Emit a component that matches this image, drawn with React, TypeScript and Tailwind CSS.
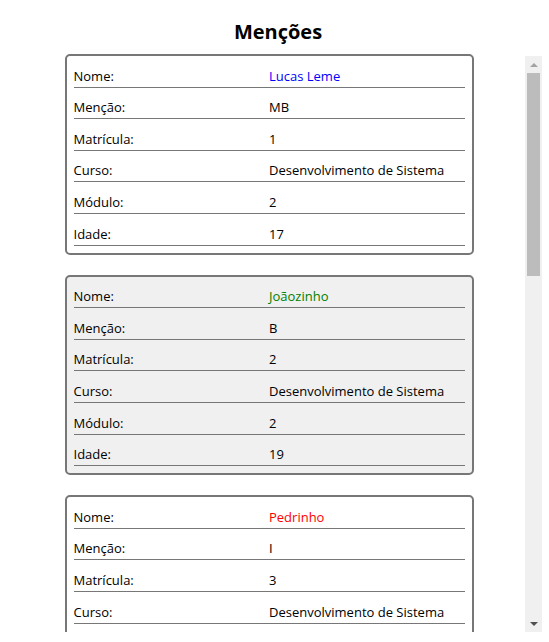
const cores: Record<string, string> = {
  MB: "text-[#0000ff]",
  B: "text-[#008000]",
  R: "text-[#ffa500]",
  I: "text-[#ff0000]",
};

const mencoes = [
  { nome: "Lucas Leme", mencao: "MB", matricula: "1", modulo: "2", idade: "17" },
  { nome: "Joãozinho", mencao: "B", matricula: "2", modulo: "2", idade: "19" },
  { nome: "Pedrinho", mencao: "I", matricula: "3", modulo: "2", idade: "18" },
  { nome: "Mariazinha", mencao: "R", matricula: "4", modulo: "2", idade: "17" },
  { nome: "Zezinho", mencao: "MB", matricula: "5", modulo: "2", idade: "20" },
  { nome: "Huguinho", mencao: "B", matricula: "6", modulo: "2", idade: "18" },
  { nome: "Luizinho", mencao: "I", matricula: "7", modulo: "2", idade: "19" },
];

function Row({ label, value, className = "" }: { label: string; value: string; className?: string }) {
  return (
    <div className="flex h-[31.6px] shrink-0 items-end border-b border-[#777] pb-[2px] leading-[17px]">
      <span className="w-1/2">{label}</span>
      <span className={`w-1/2 ${className}`}>{value}</span>
    </div>
  );
}

// fake windows-style scrollbar (headless browser hides the real one)
function Scrollbar() {
  return (
    <div className="mt-[2px] flex w-[17px] shrink-0 flex-col bg-[#f0f0f0]">
      <div className="flex h-[17px] items-center justify-center">
        <svg width="8" height="4" viewBox="0 0 8 4">
          <path d="M0 4 L4 0 L8 4 Z" fill="#a3a3a3" />
        </svg>
      </div>
      <div className="flex-1">
        <div className="mx-[2px] h-[203px] bg-[#bcbcbc]" />
      </div>
      <div className="flex h-[17px] items-center justify-center">
        <svg width="8" height="4" viewBox="0 0 8 4">
          <path d="M0 0 L8 0 L4 4 Z" fill="#505050" />
        </svg>
      </div>
    </div>
  );
}

export default function App() {
  return (
    <div className="h-[642px] bg-white px-[7px] text-[13px] text-black [font-family:'Open_Sans',sans-serif]">
      <h2 className="flex h-[54px] items-center justify-center pl-[7px] pt-[10px] text-[20px] font-bold">
        Menções
      </h2>
      <div className="flex h-[578px]">
        <div className="flex-1 overflow-hidden">
          <div className="flex flex-col items-center gap-[20px] pb-[20px] pl-[6px]">
            {mencoes.map((m, i) => (
              <div
                key={m.matricula}
                className={`w-[409px] shrink-0 rounded-[5px] border-2 border-[#777] px-[7px] pb-[7px] ${i % 2 === 1 ? "bg-[#f0f0f0]" : "bg-white"}`}
              >
                <Row label="Nome:" value={m.nome} className={cores[m.mencao]} />
                <Row label="Menção:" value={m.mencao} />
                <Row label="Matrícula:" value={m.matricula} />
                <Row label="Curso:" value="Desenvolvimento de Sistema" />
                <Row label="Módulo:" value={m.modulo} />
                <Row label="Idade:" value={m.idade} />
              </div>
            ))}
          </div>
        </div>
        <Scrollbar />
      </div>
    </div>
  );
}
